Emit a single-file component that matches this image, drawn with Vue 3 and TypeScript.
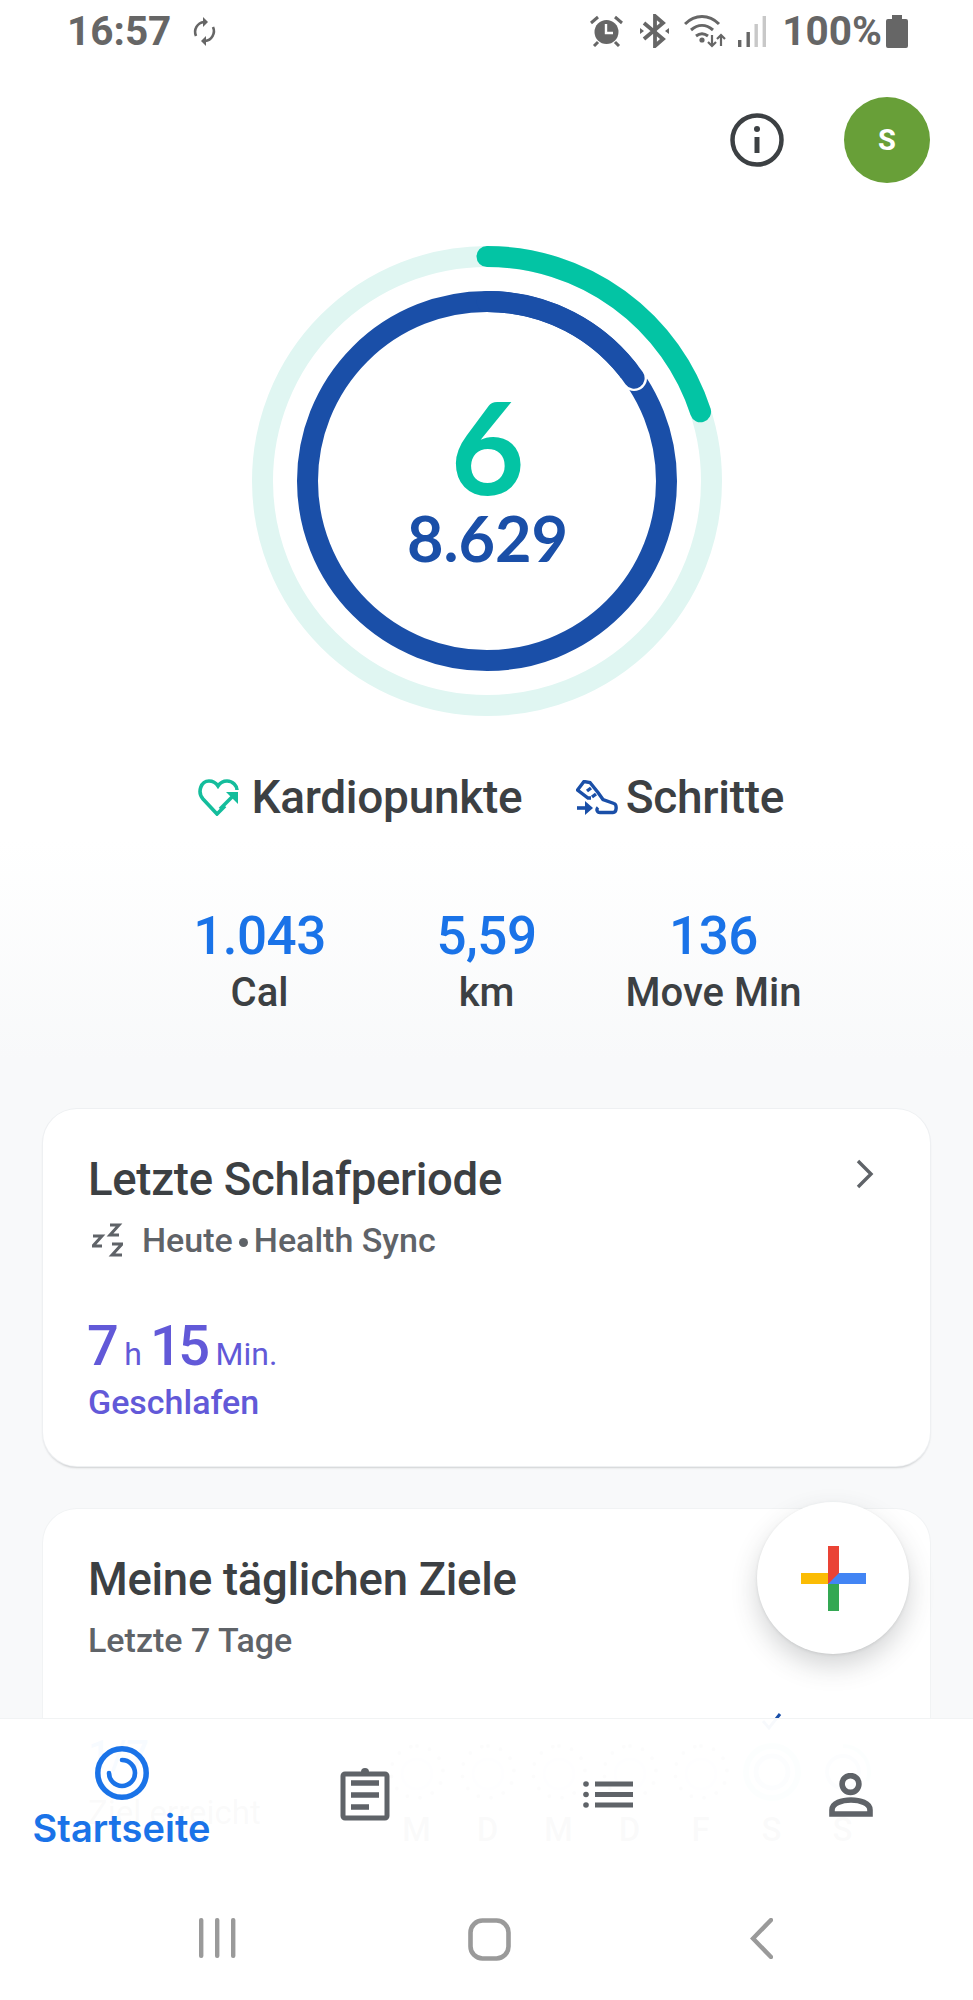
<script setup lang="ts">
const outerR = 224.5;
const innerR = 179.5;
const outerLen = 2 * Math.PI * outerR;
const innerLen = 2 * Math.PI * innerR;
const outerDash = `${outerLen * 0.2} ${outerLen}`;
const innerDash = `${(innerLen * 55) / 360} ${innerLen}`;
const capAngle = (55 * Math.PI) / 180;
const capX = 235 + innerR * Math.sin(capAngle);
const capY = 235 - innerR * Math.cos(capAngle);

const stats = [
  { value: "1.043", label: "Cal" },
  { value: "5,59", label: "km" },
  { value: "136", label: "Move Min" },
];

const days = [
  { label: "M", done: false, arc: 0 },
  { label: "D", done: false, arc: 0 },
  { label: "M", done: false, arc: 0 },
  { label: "D", done: false, arc: 0 },
  { label: "F", done: false, arc: 0 },
  { label: "S", done: true, arc: 1 },
  { label: "S", done: false, arc: 0.3 },
];
</script>

<template>
  <div class="phone">
    <header class="status">
      <span class="status-text">16:57</span>
      <svg class="sync" width="25" height="29" viewBox="0 0 25 29" fill="none" stroke="#666" stroke-width="2.6">
        <path d="M4 19a10 10 0 0 1 8-14" />
        <path d="M21 10a10 10 0 0 1-8 14" />
        <path d="M11 0v10l5-5z" fill="#666" stroke="none" />
        <path d="M14 19v10l-5-5z" fill="#666" stroke="none" />
      </svg>
      <div class="status-right">
        <svg width="33" height="32" viewBox="0 0 33 32" fill="none" stroke="#666">
          <circle cx="16.5" cy="17" r="12" fill="#666" stroke="none" />
          <path d="M16 9v9h7" stroke="#fff" stroke-width="2.4" />
          <path d="M1 8l7-6M32 8l-7-6M4 31l4-4M29 31l-4-4" stroke-width="3" />
        </svg>
        <svg class="bt" width="29" height="34" viewBox="0 0 29 34" fill="none" stroke="#666" stroke-width="3.8">
          <path d="M4 9l19 16-8 7V2l8 7L4 25" />
          <path d="M0 14l4 3-4 3zM29 14l-4 3 4 3z" fill="#666" stroke="none" />
        </svg>
        <svg class="wifi" width="42" height="33" viewBox="0 0 42 33" fill="none" stroke="#666" stroke-width="3">
          <path d="M1 9c10-10 24-10 34 0" />
          <path d="M7 15c7-6 15-6 22 0" />
          <path d="M12 21c4-3 8-3 12 0" />
          <circle cx="18" cy="25" r="2.6" fill="#666" stroke="none" />
          <path d="M28 20v11M24 27l4 4 4-4M37 31V20M33 24l4-4 4 4" stroke-width="2.2" />
        </svg>
        <svg class="signal" width="28" height="31" viewBox="0 0 28 31">
          <rect x="0" y="24" width="3.4" height="7" fill="#666" />
          <rect x="8.5" y="16" width="3.4" height="15" fill="#666" />
          <rect x="16.5" y="8" width="3.4" height="23" fill="#c8c8c8" />
          <rect x="24.6" y="0" width="3.4" height="31" fill="#c8c8c8" />
        </svg>
        <span class="status-text pct">100%</span>
        <svg width="22" height="33" viewBox="0 0 22 33">
          <path d="M6 0h10v4h4a2 2 0 0 1 2 2v25a2 2 0 0 1-2 2H2a2 2 0 0 1-2-2V6a2 2 0 0 1 2-2h4z" fill="#666" />
        </svg>
      </div>
    </header>

    <div class="top-actions">
      <svg width="54" height="54" viewBox="0 0 54 54" fill="none" stroke="#3c4043">
        <circle cx="27" cy="27" r="24.5" stroke-width="4.5" />
        <path d="M27 24v16" stroke-width="5" />
        <circle cx="27" cy="16" r="3" fill="#3c4043" stroke="none" />
      </svg>
      <div class="avatar">S</div>
    </div>

    <div class="ring">
      <svg width="470" height="470" viewBox="0 0 470 470" fill="none">
        <circle cx="235" cy="235" :r="outerR" stroke="#e0f6f2" stroke-width="21" />
        <circle
          cx="235"
          cy="235"
          :r="outerR"
          stroke="#03c4a4"
          stroke-width="21"
          stroke-linecap="round"
          :stroke-dasharray="outerDash"
          transform="rotate(-90 235 235)"
        />
        <circle cx="235" cy="235" :r="innerR" stroke="#1a4fa8" stroke-width="21" />
        <circle :cx="capX" :cy="capY" r="13" fill="#fff" />
        <circle
          cx="235"
          cy="235"
          :r="innerR"
          stroke="#1a4fa8"
          stroke-width="21"
          stroke-linecap="round"
          :stroke-dasharray="innerDash"
          transform="rotate(-90 235 235)"
        />
      </svg>
      <div class="ring-center">
        <span class="ring-points">6</span>
        <span class="ring-steps">8.629</span>
      </div>
    </div>

    <div class="legend">
      <div class="legend-item">
        <svg width="42" height="38" viewBox="0 0 42 38" fill="none" stroke="#14bd9c" stroke-width="3.6">
          <path d="M27 28l-8 8L5 21C-1 14 3 3 11 3c4 0 7 2 9 5 2-3 5-5 9-5 6 0 10 5 10 9" />
          <path d="M22 31l14-14" />
          <path d="M28 14h12v12z" fill="#14bd9c" stroke="none" />
        </svg>
        <span>Kardiopunkte</span>
      </div>
      <div class="legend-item steps">
        <svg width="42" height="35" viewBox="0 0 42 35" fill="none" stroke="#1a4fa8" stroke-width="3.4">
          <path d="M15 18h-3L1.500 10 8 1.500l6 1 8 10 5 7 11 4c3 1 3 9-1 9H24c-3 0-4-3-2-5" />
          <path d="M15 8l-4 3M20 14l-4 3" />
          <path d="M1 28h11" stroke-width="3.6" />
          <path d="M9 21l8 7-8 7z" fill="#1a4fa8" stroke="none" />
        </svg>
        <span>Schritte</span>
      </div>
    </div>

    <div class="stats">
      <div v-for="stat in stats" :key="stat.label" class="stat">
        <div class="stat-value">{{ stat.value }}</div>
        <div class="stat-label">{{ stat.label }}</div>
      </div>
    </div>

    <section class="card">
      <svg class="chevron" width="18" height="30" viewBox="0 0 18 30" fill="none" stroke="#5f6368" stroke-width="3.4">
        <path d="M2 2l13 13L2 28" />
      </svg>
      <h2 class="card-title">Letzte Schlafperiode</h2>
      <div class="card-sub">
        <svg width="31" height="34" viewBox="0 0 31 34" fill="none" stroke="#5f6368" stroke-width="3">
          <path d="M1 13h9L1 23h9" />
          <path d="M18 2h9l-9 10h9" />
          <path d="M20 21h10l-10 11h10" />
        </svg>
        <span>Heute</span>
        <span class="dot"></span>
        <span>Health Sync</span>
      </div>
      <div class="sleep-value">
        <b>7</b><i>h</i><b>15</b><i>Min.</i>
      </div>
      <div class="sleep-label">Geschlafen</div>
    </section>

    <section class="card goals">
      <h2 class="card-title">Meine täglichen Ziele</h2>
      <div class="card-sub plain">Letzte 7 Tage</div>
      <div class="chart">
        <div class="chart-left">
          <div class="chart-count">1/7</div>
          <div class="chart-note">Ziel erreicht</div>
        </div>
        <div class="chart-days">
          <div v-for="(day, i) in days" :key="i" class="day">
            <svg class="check" width="20" height="18" viewBox="0 0 20 18" fill="none">
              <path v-if="day.done" d="M1 9l6 7L18 2" stroke="#1a4fa8" stroke-width="3" />
            </svg>
            <svg class="day-ring" width="60" height="60" viewBox="0 0 60 60" fill="none">
              <template v-if="day.arc === 1">
                <circle cx="30" cy="30" r="26" stroke="#8fe3d4" stroke-width="6" />
                <circle cx="30" cy="30" r="16" stroke="#9db4dc" stroke-width="5" />
              </template>
              <template v-else-if="day.arc > 0">
                <circle cx="30" cy="30" r="26" stroke="#8fe3d4" stroke-width="4" stroke-dasharray="50 164" transform="rotate(-90 30 30)" />
                <circle cx="30" cy="30" r="16" stroke="#9db4dc" stroke-width="4" />
              </template>
              <template v-else>
                <circle cx="30" cy="30" r="26" stroke="#9aa0a6" stroke-width="4" stroke-linecap="round" stroke-dasharray="0 13" transform="rotate(-90 30 30)" />
                <circle cx="30" cy="32" r="15" stroke="#c9d6ec" stroke-width="3" />
              </template>
            </svg>
            <span class="day-label">{{ day.label }}</span>
          </div>
        </div>
      </div>
    </section>

    <button class="fab" type="button">
      <svg width="65" height="65" viewBox="0 0 65 65">
        <rect x="27" y="0" width="11" height="38" fill="#ea4335" />
        <rect x="0" y="27" width="27" height="11" fill="#fbbc04" />
        <rect x="27" y="38" width="11" height="27" fill="#34a853" />
        <path d="M38 27h27v11H27z" fill="#4285f4" />
      </svg>
    </button>

    <nav class="bottom">
      <div class="tabs">
        <div class="tab active">
          <svg width="54" height="54" viewBox="0 0 54 54" fill="none" stroke="#1a73e8">
            <circle cx="27" cy="27" r="24.2" stroke-width="5.5" />
            <path d="M27 14a13 13 0 1 1-13 13" stroke-width="4.6" stroke-linecap="round" />
          </svg>
          <span>Startseite</span>
        </div>
        <div class="tab">
          <svg width="50" height="54" viewBox="0 0 50 54" fill="none" stroke="#5f6368">
            <path d="M5 7h40a2 2 0 0 1 2 2v40a2 2 0 0 1-2 2H5a2 2 0 0 1-2-2V9a2 2 0 0 1 2-2z" stroke-width="5" />
            <circle cx="25" cy="5" r="4" fill="#5f6368" stroke="none" />
            <path d="M11 16h28M11 28h28M11 40h18" stroke-width="5.5" />
          </svg>
        </div>
        <div class="tab list">
          <svg width="50" height="27" viewBox="0 0 50 27" fill="#5f6368">
            <circle cx="3" cy="3" r="2.8" />
            <circle cx="3" cy="13.5" r="2.8" />
            <circle cx="3" cy="24" r="2.8" />
            <rect x="12" y="0.5" width="38" height="5" />
            <rect x="12" y="11" width="38" height="5" />
            <rect x="12" y="21.5" width="38" height="5" />
          </svg>
        </div>
        <div class="tab person">
          <svg width="44" height="44" viewBox="0 0 44 44" fill="none" stroke="#5f6368" stroke-width="5.6">
            <circle cx="21.5" cy="11" r="8.4" />
            <path d="M3 41v-4c0-7 10-10 19-10s19 3 19 10v4z" />
          </svg>
        </div>
      </div>
      <div class="softkeys">
        <div class="softkey">
          <svg width="37" height="40" viewBox="0 0 37 40" fill="#9a9a9a">
            <rect x="0" y="0" width="4.4" height="40" rx="2" />
            <rect x="16" y="0" width="4.4" height="40" rx="2" />
            <rect x="32" y="0" width="4.4" height="40" rx="2" />
          </svg>
        </div>
        <div class="softkey">
          <svg width="43" height="43" viewBox="0 0 43 43" fill="none" stroke="#9a9a9a" stroke-width="4.6">
            <rect x="2.5" y="2.5" width="38" height="38" rx="12" />
          </svg>
        </div>
        <div class="softkey">
          <svg width="23" height="41" viewBox="0 0 23 41" fill="none" stroke="#9a9a9a" stroke-width="4.4" stroke-linecap="round">
            <path d="M21 2L3 20.500l18 18.500" />
          </svg>
        </div>
      </div>
    </nav>
  </div>
</template>

<style>
html,
body {
  background: #fff;
}
</style>

<style scoped>
.phone {
  position: relative;
  width: 973px;
  height: 2000px;
  overflow: hidden;
  font-family: Roboto, "Liberation Sans", sans-serif;
  background: linear-gradient(#fff 0, #fff 840px, #f8f9fa 1060px);
}

.status {
  display: flex;
  align-items: center;
  height: 62px;
  padding: 0 65px 0 67px;
  box-sizing: border-box;
  color: #666;
}

.status-text {
  font-size: 40.5px;
  font-weight: 700;
  line-height: 62px;
}

.sync {
  margin-left: 21px;
}

.status-right {
  display: flex;
  align-items: center;
  margin-left: auto;
}

.bt {
  margin-left: 17px;
}

.wifi {
  margin-left: 15px;
}

.signal {
  margin-left: 12px;
}

.pct {
  margin: 0 4px 0 16px;
}

.top-actions {
  display: flex;
  align-items: center;
  justify-content: flex-end;
  gap: 60px;
  padding: 35px 43px 0 0;
}

.avatar {
  display: flex;
  align-items: center;
  justify-content: center;
  width: 86px;
  height: 86px;
  border-radius: 50%;
  background: #689f38;
  color: #fff;
  font-size: 29px;
  font-weight: 700;
}

.ring {
  position: relative;
  width: 470px;
  height: 470px;
  margin: 63px auto 0;
}

.ring svg {
  display: block;
}

.ring-center {
  position: absolute;
  inset: 0;
  display: flex;
  flex-direction: column;
  align-items: center;
  padding: 141px 0 0 2px;
  box-sizing: border-box;
}

.ring-points {
  font-family: Lato, sans-serif;
  font-size: 128px;
  font-weight: 700;
  line-height: 118px;
  color: #03c4a4;
}

.ring-steps {
  font-family: Lato, sans-serif;
  font-size: 63px;
  font-weight: 700;
  line-height: 66px;
  color: #1a4fa8;
}

.legend {
  display: flex;
  justify-content: center;
  gap: 53.5px;
  height: 56px;
  margin-top: 53px;
  padding-left: 9.5px;
  color: #3c4043;
  font-size: 46px;
  font-weight: 500;
}

.legend-item {
  display: flex;
  align-items: center;
  gap: 11px;
  letter-spacing: -0.3px;
}

.legend-item.steps {
  gap: 8px;
}

.stats {
  display: flex;
  justify-content: center;
  margin-top: 81px;
}

.stat {
  width: 227px;
  text-align: center;
}

.stat-value {
  font-size: 53px;
  font-weight: 500;
  line-height: 60px;
  letter-spacing: -0.5px;
  color: #1a73e8;
}

.stat-label {
  margin-top: 4px;
  font-size: 40px;
  font-weight: 500;
  line-height: 46px;
  color: #3c4043;
}

.card {
  position: relative;
  margin: 93px 43px 0;
  padding: 43px 45px;
  height: 357px;
  box-sizing: border-box;
  background: #fff;
  border-radius: 34px;
  box-shadow: 0 0 0 1px #eef0f2, 0 2px 2px rgba(60, 64, 67, 0.22);
}

.goals {
  margin-top: 43px;
  height: 600px;
  box-shadow: 0 0 0 1px #f1f3f4;
}

.chevron {
  position: absolute;
  top: 50px;
  right: 56px;
}

.card-title {
  margin: 0;
  font-size: 45.5px;
  font-weight: 500;
  line-height: 56px;
  letter-spacing: -0.3px;
  color: #3c4043;
}

.card-sub {
  display: flex;
  align-items: center;
  height: 44px;
  margin-top: 10px;
  font-size: 34px;
  font-weight: 500;
  color: #5f6368;
  white-space: nowrap;
}

.card-sub svg {
  margin: 0 19px 0 4px;
}

.dot {
  width: 9px;
  height: 9px;
  margin: 4px 6px 0;
  border-radius: 50%;
  background: #5f6368;
}

.sleep-value {
  margin-top: 52px;
  font-size: 56px;
  line-height: 64px;
  margin-left: -1px;
  color: #6259d8;
}

.sleep-value b {
  font-weight: 500;
  letter-spacing: -3.5px;
}

.sleep-value i {
  margin: 0 8px 0 9px;
  font-size: 32px;
  font-style: normal;
  line-height: 1;
}

.sleep-label {
  margin-top: 2px;
  font-size: 34px;
  font-weight: 500;
  line-height: 44px;
  color: #6259d8;
}

.chart {
  display: flex;
  justify-content: space-between;
  margin-top: 50px;
}

.chart-left {
  padding-top: 20px;
  color: #5f6368;
}

.chart-count {
  font-size: 40px;
  font-weight: 500;
  color: #1a73e8;
}

.chart-note {
  margin-top: 14px;
  font-size: 33px;
}

.chart-days {
  display: flex;
  margin-right: 7px;
}

.day {
  display: flex;
  flex-direction: column;
  align-items: center;
  width: 71px;
}

.check {
  height: 18px;
}

.day-ring {
  margin-top: 12px;
}

.day-label {
  margin-top: 8px;
  font-size: 33px;
  font-weight: 500;
  line-height: 40px;
  color: #5f6368;
}

.fab {
  position: absolute;
  top: 1502px;
  left: 757px;
  display: flex;
  align-items: center;
  justify-content: center;
  width: 152px;
  height: 152px;
  padding: 0;
  border: none;
  border-radius: 50%;
  background: #fff;
  box-shadow: 0 12px 26px rgba(60, 64, 67, 0.22), 0 1px 3px rgba(60, 64, 67, 0.12);
}

.bottom {
  position: absolute;
  top: 1718px;
  left: 0;
  right: 0;
  bottom: 0;
  border-top: 1px solid #f1f3f4;
  background: rgba(255, 255, 255, 0.97);
}

.tabs {
  display: grid;
  grid-template-columns: repeat(4, 243px);
  height: 154px;
}

.tab {
  display: flex;
  flex-direction: column;
  align-items: center;
  padding-top: 48px;
}

.tab.active {
  padding-top: 27px;
  color: #1a73e8;
  font-family: Inter, sans-serif;
  font-size: 38px;
  font-weight: 600;
  line-height: 46px;
}

.tab.active span {
  margin-top: 5px;
}

.tab.list {
  padding-top: 62px;
}

.tab.person {
  padding-top: 54px;
}

.softkeys {
  display: flex;
  justify-content: center;
  padding: 45px 0 0 5px;
}

.softkey {
  display: flex;
  justify-content: center;
  width: 272px;
}
</style>
